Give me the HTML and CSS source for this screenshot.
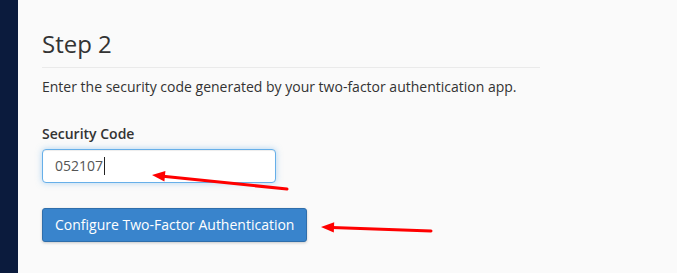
FILE: index.html
```html
<!DOCTYPE html>
<html lang="en">
<head>
<meta charset="utf-8">
<title>Step 2</title>
<link rel="stylesheet" href="styles.css">
</head>
<body>
<div class="layout">
  <aside class="sidebar"></aside>
  <main class="main">
    <h2 class="step-title">Step 2</h2>
    <p class="step-desc">Enter the security code generated by your two-factor authentication app.</p>
    <div class="form-group">
      <label class="field-label">Security Code</label>
      <div class="field-input" role="textbox">052107<span class="caret"></span></div>
    </div>
    <button class="btn-primary" type="button">Configure Two-Factor Authentication</button>
  </main>
</div>
<svg class="annotations" width="677" height="273" viewBox="0 0 677 273" aria-hidden="true">
  <line x1="287" y1="189" x2="163" y2="176.3" stroke="#ff0000" stroke-width="3" stroke-linecap="round"/>
  <polygon points="152,175 164.4,181.4 165.4,171" fill="#ff0000"/>
  <line x1="431" y1="231" x2="332" y2="227.4" stroke="#ff0000" stroke-width="3" stroke-linecap="round"/>
  <polygon points="321,227 334.2,222.2 333.8,232.6" fill="#ff0000"/>
</svg>
</body>
</html>
```

FILE: styles.css
```css
html, body {
  margin: 0;
  padding: 0;
  background: #fafafa;
}
body {
  font-family: "Open Sans", "Liberation Sans", sans-serif;
  color: #333;
  width: 677px;
  height: 273px;
  overflow: hidden;
  position: relative;
}
.layout {
  display: flex;
  height: 273px;
}
.sidebar {
  width: 18px;
  flex: none;
  background: #0b1b3d;
}
.main {
  flex: 1;
  padding: 31px 0 0 24px;
}
.step-title {
  margin: 0;
  width: 498px;
  font-size: 24px;
  line-height: 26px;
  font-weight: 400;
  color: #333;
  padding-bottom: 10px;
  border-bottom: 1px solid #eaeaea;
}
.step-desc {
  margin: 9px 0 0;
  font-size: 14px;
  line-height: 20px;
}
.form-group {
  margin-top: 27px;
  display: flex;
  flex-direction: column;
  align-items: flex-start;
}
.field-label {
  font-size: 14px;
  line-height: 20px;
  font-weight: 600;
  margin-bottom: 5px;
}
.field-input {
  box-sizing: border-box;
  width: 234px;
  height: 34px;
  padding: 6px 12px;
  font-size: 14px;
  line-height: 20px;
  color: #555;
  background: #fff;
  border: 1px solid #66afe9;
  border-radius: 4px;
  box-shadow: inset 0 1px 1px rgba(0,0,0,.075), 0 0 6px rgba(102,175,233,.5);
  display: flex;
  align-items: center;
}
.caret {
  display: inline-block;
  width: 1px;
  height: 18px;
  background: #222;
  margin-left: 1px;
}
.btn-primary {
  margin-top: 25px;
  box-sizing: border-box;
  height: 34px;
  width: 265px;
  padding: 6px 12px;
  font-family: "Open Sans", "Liberation Sans", sans-serif;
  font-size: 14px;
  line-height: 20px;
  color: #fff;
  background: #3984cc;
  border: 1px solid #2f6eab;
  border-radius: 3px;
  box-shadow: 0 1px 3px rgba(0,0,0,.2);
  cursor: pointer;
  white-space: nowrap;
}
.annotations {
  position: absolute;
  left: 0;
  top: 0;
  pointer-events: none;
}
```
